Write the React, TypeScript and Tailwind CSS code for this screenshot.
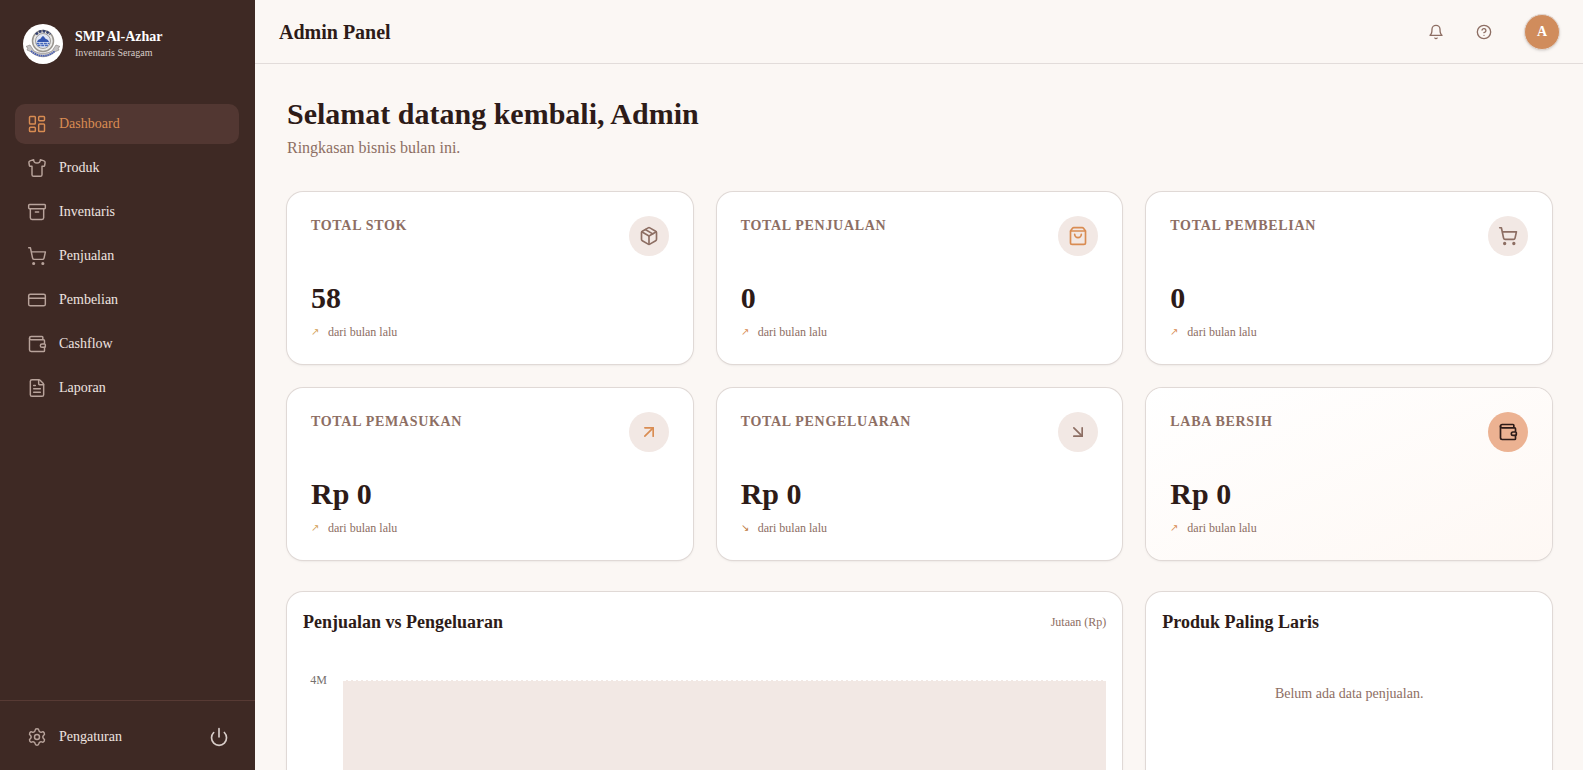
import {
  Archive,
  ArrowDownRight,
  ArrowUpRight,
  CircleHelp,
  CreditCard,
  FileText,
  LayoutDashboard,
  Package,
  Power,
  Settings,
  Shirt,
  ShoppingBag,
  ShoppingCart,
  Wallet,
  type LucideIcon,
} from "lucide-react";

const navItems: { label: string; icon: LucideIcon; active?: boolean }[] = [
  { label: "Dashboard", icon: LayoutDashboard, active: true },
  { label: "Produk", icon: Shirt },
  { label: "Inventaris", icon: Archive },
  { label: "Penjualan", icon: ShoppingCart },
  { label: "Pembelian", icon: CreditCard },
  { label: "Cashflow", icon: Wallet },
  { label: "Laporan", icon: FileText },
];

type Stat = {
  label: string;
  value: string;
  icon: LucideIcon;
  iconClass: string;
  trend: "up" | "down";
  trendClass: string;
  highlight?: boolean;
};

const stats: Stat[] = [
  { label: "Total Stok", value: "58", icon: Package, iconClass: "bg-[#f2e8e4] text-[#8d6e63]", trend: "up", trendClass: "text-[#d4a056]" },
  { label: "Total Penjualan", value: "0", icon: ShoppingBag, iconClass: "bg-[#f2e8e4] text-[#d98c52]", trend: "up", trendClass: "text-[#d98c52]" },
  { label: "Total Pembelian", value: "0", icon: ShoppingCart, iconClass: "bg-[#f2e8e4] text-[#8d6e63]", trend: "up", trendClass: "text-[#d98c52]" },
  { label: "Total Pemasukan", value: "Rp 0", icon: ArrowUpRight, iconClass: "bg-[#f2e8e4] text-[#d98c52]", trend: "up", trendClass: "text-[#d4a056]" },
  { label: "Total Pengeluaran", value: "Rp 0", icon: ArrowDownRight, iconClass: "bg-[#f2e8e4] text-[#8d6e63]", trend: "down", trendClass: "text-[#c07a3c]" },
  { label: "Laba Bersih", value: "Rp 0", icon: Wallet, iconClass: "bg-[#ecb292] text-[#2d1b18]", trend: "up", trendClass: "text-[#d98c52]", highlight: true },
];

const cardShell = "rounded-2xl shadow-sm ring-1 ring-[#e0d9d6]";

function Logo() {
  return (
    <svg viewBox="0 0 40 40" className="size-10 shrink-0" role="img" aria-label="Logo sekolah">
      <circle cx="20" cy="20" r="20" fill="#fff" />
      <circle cx="20" cy="17" r="10.5" fill="#e9e8e6" stroke="#99958f" strokeWidth="1.5" />
      <circle cx="20" cy="17" r="7.5" fill="#dfe5f2" stroke="#8f8c88" strokeWidth="0.8" />
      <path d="M13 10.500a9 9 0 0 1 14 0" fill="none" stroke="#34406f" strokeWidth="2.600" strokeDasharray="2.600 1.200" />
      <path d="M14 18c.5-2 2-2.800 3.500-3.200.6-1.300 1.500-2 2.500-2.800 1 .8 1.900 1.500 2.500 2.800 1.500.4 3 1.200 3.500 3.200z" fill="#3456b0" />
      <path d="M13.500 19.500h13M14.500 21.500h11" stroke="#4668bc" strokeWidth="1.500" strokeDasharray="3 .7" />
      <path d="M3 22.500l4-1.500 4 6c6 3 12 3 18 0l4-6 4 1.500-2 1.500 1 2-3.500 1.500c-8 7-17 7-25 0L4 26l1-2z" fill="#c5c3c4" stroke="#8f8a88" strokeWidth="0.700" />
      <path d="M8 27c7.500 6.500 16.500 6.500 24 0" fill="none" stroke="#4a60b4" strokeWidth="1.800" strokeDasharray="1.600 .6" />
    </svg>
  );
}

function BellIcon() {
  return (
    <svg
      viewBox="0 0 24 24"
      className="size-4"
      fill="none"
      stroke="currentColor"
      strokeWidth="2"
      strokeLinecap="round"
      strokeLinejoin="round"
      aria-hidden="true"
    >
      <path d="M6 8a6 6 0 0 1 12 0c0 7 3 9 3 9H3s3-2 3-9" />
      <path d="M10.300 21a1.940 1.940 0 0 0 3.400 0" />
    </svg>
  );
}

function Sidebar() {
  return (
    <aside className="flex w-[255px] shrink-0 flex-col bg-[#3e2924] text-[#efe4e0]">
      <div className="flex items-center gap-3 px-[23px] py-6">
        <Logo />
        <div className="pb-0.5">
          <p className="text-sm leading-5 font-bold text-white">SMP Al-Azhar</p>
          <p className="text-[10px] leading-3 text-[#d7ccc8]">Inventaris Seragam</p>
        </div>
      </div>
      <nav className="mt-4 flex flex-1 flex-col gap-1 pr-4 pl-[15px]">
        {navItems.map(({ label, icon: Icon, active }) => (
          <a
            key={label}
            href="#"
            aria-current={active ? "page" : undefined}
            className={`flex h-10 items-center gap-3 rounded-[10px] px-3 text-sm ${active ? "bg-[#523732] text-[#d98c52]" : ""}`}
          >
            <Icon size={20} strokeWidth={1.75} className={active ? "" : "text-[#b8a39b]"} />
            {label}
          </a>
        ))}
      </nav>
      <div className="flex items-center justify-between border-t border-[#573a34] pt-4 pr-4 pb-[13px] pl-[15px]">
        <a href="#" className="flex h-10 items-center gap-3 px-3 text-sm">
          <Settings size={20} strokeWidth={1.75} className="text-[#b8a39b]" />
          Pengaturan
        </a>
        <button type="button" aria-label="Keluar" className="flex size-10 items-center justify-center">
          <Power size={20} strokeWidth={2} className="text-[#d7ccc8]" />
        </button>
      </div>
    </aside>
  );
}

function Header() {
  return (
    <header className="flex h-16 shrink-0 items-center justify-between border-b border-[#e2dcda] pr-[23px] pl-6">
      <p className="text-xl font-bold">Admin Panel</p>
      <div className="flex items-center gap-2 text-[#8d6e63]">
        <button type="button" aria-label="Notifikasi" className="flex size-10 items-center justify-center">
          <BellIcon />
        </button>
        <button type="button" aria-label="Bantuan" className="flex size-10 items-center justify-center">
          <CircleHelp size={16} strokeWidth={2} />
        </button>
        <button
          type="button"
          aria-label="Profil A"
          className="ml-3 flex size-9 items-center justify-center rounded-full border border-[#e3d8d2] bg-[#d08c5c] text-sm font-bold text-white shadow-sm"
        >
          A
        </button>
      </div>
    </header>
  );
}

function StatCard({ stat }: { stat: Stat }) {
  const Icon = stat.icon;
  return (
    <section className={`${cardShell} p-6 ${stat.highlight ? "bg-linear-to-br from-white to-[#fef8f4]" : "bg-white"}`}>
      <div className="flex items-start justify-between">
        <h2 className="text-sm font-bold tracking-wider text-[#8d6e63] uppercase">{stat.label}</h2>
        <span className={`flex size-10 items-center justify-center rounded-full ${stat.iconClass}`}>
          <Icon size={20} strokeWidth={2} />
        </span>
      </div>
      <p className="mt-6 text-3xl leading-9 font-bold">{stat.value}</p>
      <p className="mt-2 flex items-center gap-2 text-xs leading-4 text-[#8d6e63]">
        <span className={`w-[9px] text-[10px] ${stat.trendClass}`}>{stat.trend === "up" ? "↗" : "↘"}</span>
        dari bulan lalu
      </p>
    </section>
  );
}

function SalesChart() {
  return (
    <section className={`${cardShell} col-span-2 bg-white p-4`}>
      <div className="flex items-center justify-between">
        <h2 className="text-lg leading-7 font-bold">Penjualan vs Pengeluaran</h2>
        <span className="text-xs text-[#8d6e63]">Jutaan (Rp)</span>
      </div>
      <div className="mt-11 flex h-64 gap-4">
        <span className="-mt-2 w-6 text-right text-xs leading-4 text-[#75706e]">4M</span>
        <div className="flex-1 border-t border-dashed border-white bg-[#f2e8e4]" />
      </div>
    </section>
  );
}

function TopProducts() {
  return (
    <section className={`${cardShell} bg-white p-4`}>
      <h2 className="text-lg leading-7 font-bold">Produk Paling Laris</h2>
      <p className="mt-12 text-center text-sm text-[#8d6e63]">Belum ada data penjualan.</p>
    </section>
  );
}

export default function App() {
  return (
    <div className="flex h-screen overflow-hidden bg-[#fbf7f4] font-['Liberation_Serif',serif] text-[#2d1b18]">
      <Sidebar />
      <div className="flex min-w-0 flex-1 flex-col">
        <Header />
        <main className="flex-1 overflow-y-auto py-8 pr-[31px] pl-8 [scrollbar-width:none]">
          <h1 className="text-3xl leading-9 font-bold">Selamat datang kembali, Admin</h1>
          <p className="mt-1 text-base leading-6 text-[#8d6e63]">Ringkasan bisnis bulan ini.</p>
          <div className="mt-8 grid grid-cols-3 gap-6">
            {stats.map((stat) => (
              <StatCard key={stat.label} stat={stat} />
            ))}
          </div>
          <div className="mt-8 grid grid-cols-3 gap-6">
            <SalesChart />
            <TopProducts />
          </div>
        </main>
      </div>
    </div>
  );
}
